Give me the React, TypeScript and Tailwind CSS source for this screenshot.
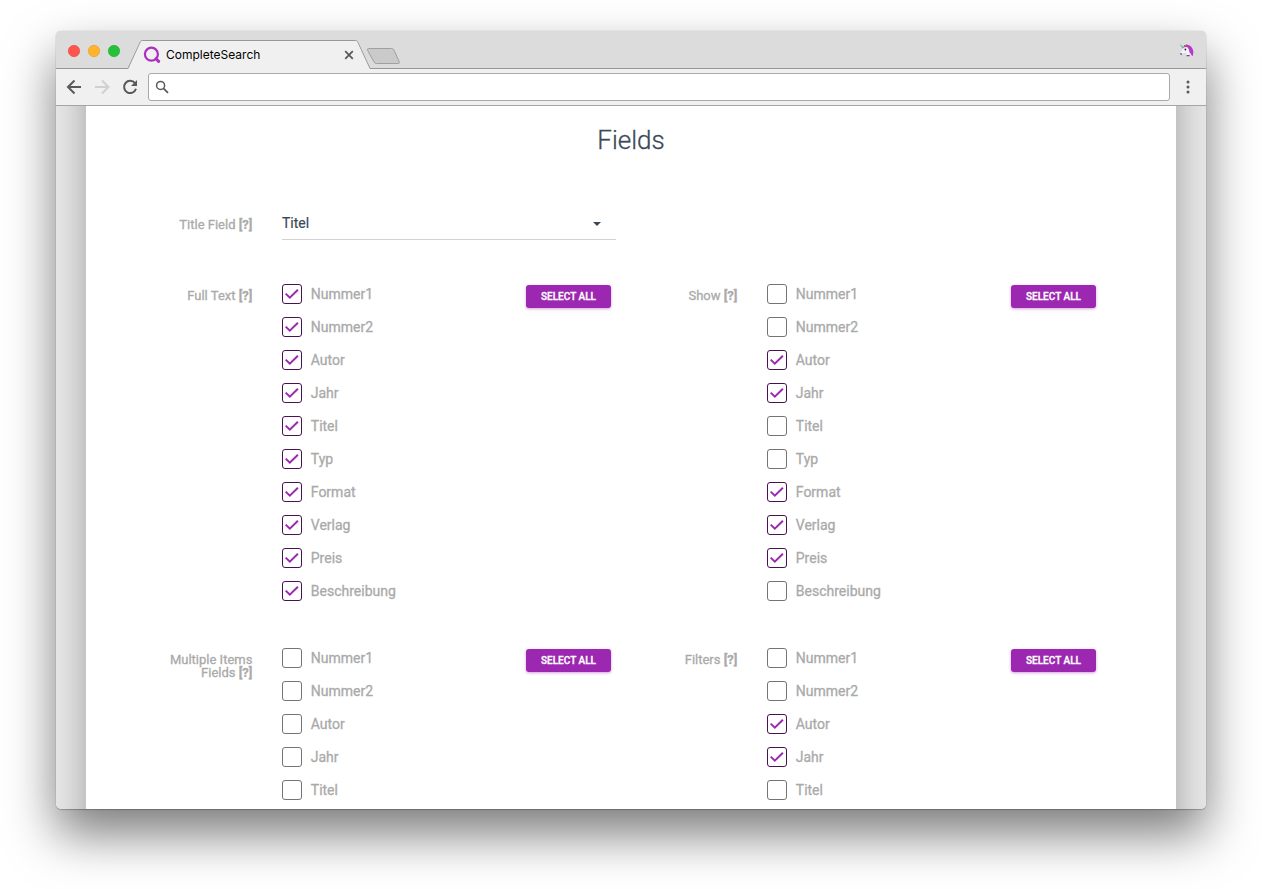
import React from "react";

const FIELDS = ["Nummer1", "Nummer2", "Autor", "Jahr", "Titel", "Typ", "Format", "Verlag", "Preis", "Beschreibung"];
const FIRST_FIELDS = FIELDS.slice(0, 5);

function Checkbox({ label, checked }: { label: string; checked: boolean }) {
  return (
    <label className="flex h-[33px] items-center">
      <span
        className={
          checked
            ? "flex size-5 items-center justify-center rounded-[3px] border border-[#4a1054]"
            : "flex size-5 items-center justify-center rounded-[3px] border border-[#747474]"
        }
      >
        {checked && (
          <svg width="18" height="18" viewBox="0 0 18 18" fill="none" stroke="#9c27b0" strokeWidth="2">
            <path d="M2.7 8.6 L6.8 12.6 L14.9 4.7" />
          </svg>
        )}
      </span>
      <span className="ml-[8.8px] text-[14px] leading-5 text-[#aaaaaa] [-webkit-text-stroke:0.3px_#aaaaaa]">{label}</span>
    </label>
  );
}

function Group({ title, fields, checked }: { title: string; fields: string[]; checked: string[] }) {
  return (
    <section className="flex h-[364px] w-[485px] items-start">
      <h4 className="w-[96.4px] pt-[12px] text-right text-[13px] leading-[13px] text-[#aaaaaa] [-webkit-text-stroke:0.3px_#aaaaaa]">
        {title} <b className="font-bold">[?]</b>
      </h4>
      <div className="ml-[29.6px] w-[244px]">
        {fields.map((f) => (
          <Checkbox key={f} label={f} checked={checked.includes(f)} />
        ))}
      </div>
      <button className="mt-[8px] h-[23px] w-[85px] rounded-[3px] bg-[#9c27b0] text-[10px] leading-[23px] font-medium text-white shadow-[0_1px_3px_rgba(156,39,176,0.45)] [-webkit-text-stroke:0.3px_white]">
        SELECT ALL
      </button>
    </section>
  );
}

function TabStrip() {
  return (
    <header className="relative flex h-[38px] shrink-0 items-center bg-[#dcdcdc]">
      <svg className="absolute inset-0" width="1150" height="38" fill="none">
        <path d="M0 37.5 H72 L84.4 10.8 Q85 9.5 86.4 9.5 H299.5 Q301 9.5 301.6 10.8 L314 37.5 H1150" stroke="#989898" />
        <path d="M72.5 38 L85 10.8 Q85.6 10 86.4 10 H299.5 Q300.4 10 301 10.8 L313.5 38 Z" fill="#f0f0f0" />
        <path d="M313 17.5 H335.5 Q337.3 17.5 338.2 19.3 L343.2 30.7 Q344 32.5 342.4 32.5 H320.5 Q318.7 32.5 317.8 30.7 L311.6 19.3 Q310.8 17.5 313 17.5 Z" fill="#cacaca" stroke="#a0a0a0" />
        <circle cx="18" cy="20" r="5.7" fill="#ff544d" stroke="#e2463f" strokeWidth=".6" />
        <circle cx="38" cy="20" r="5.7" fill="#ffb429" stroke="#e09b20" strokeWidth=".6" />
        <circle cx="58" cy="20" r="5.7" fill="#24c238" stroke="#1fa92f" strokeWidth=".6" />
        <circle cx="95.4" cy="23.2" r="6.5" stroke="#ac2fc0" strokeWidth="2.2" />
        <path d="M100 27.8 L102.6 30.4" stroke="#ac2fc0" strokeWidth="3" strokeLinecap="round" />
        <path d="M289.2 20.2 L296.8 27.8 M296.8 20.2 L289.2 27.8" stroke="#5a5a5a" strokeWidth="1.8" />
      </svg>
      <span className="relative ml-[110px] pt-[10px] font-[Inter,sans-serif] text-[12px] leading-[18px] text-black">CompleteSearch</span>
      <svg className="relative mr-3 ml-auto" width="15" height="15" viewBox="0 0 15 15">
        <path d="M6 2.2 C10 .5 14 4 14.4 9 Q14.4 12 13.2 13.2 Q12 10.5 10.2 9 Q9.6 5.5 6 2.2Z" fill="#b43ccb" />
        <path d="M4.5 4.5 Q7.5 3 9 5 Q10.8 7.5 10.4 9.5 L10.8 12.8 L7.2 13 L7.5 9.8 Q5 9.5 3.6 11 Q1.2 11.8 1 9.8 L3.4 6.7 Z" fill="#f2f2fa" />
        <path d="M.6 1 L5 4.5 L3.8 5.7 Z" fill="#51ba9b" />
        <path d="M4.8 4.2 L5.6 2 L6.6 3.8 L7.6 1.5 L8.5 4" fill="#c23f8f" stroke="#bc486f" strokeWidth=".6" />
        <circle cx="6.4" cy="6.5" r=".9" fill="#222" />
        <path d="M1.2 10.5 L3 11.4 M7.6 12.6 H10.6" stroke="#7d398a" strokeWidth="1.2" />
      </svg>
    </header>
  );
}

function Toolbar() {
  return (
    <nav className="flex h-[37px] shrink-0 items-center border-b border-[#a5a5a5] bg-[#f0f0f0]">
      <svg width="92" height="36" fill="none" strokeWidth="2">
        <path d="M25 18 H12 M18.5 11.5 L12 18 L18.5 24.5" stroke="#5a5a5a" />
        <path d="M39 18 H52 M46 11.5 L52.5 18 L46 24.5" stroke="#d0d0d0" />
        <path d="M79 14.2 A6.1 6.1 0 1 0 80 19.8" stroke="#5a5a5a" />
        <path d="M81 11 V17 H75 Z" fill="#5a5a5a" />
      </svg>
      <div className="flex h-7 w-[1022px] items-center rounded-[3px] border border-[#a9a9a9] bg-white pl-[6px]">
        <svg width="14" height="14" fill="none" stroke="#5a5a5a" strokeWidth="1.5">
          <circle cx="5.6" cy="5.4" r="4" />
          <path d="M8.5 8.3 L13 12.8" strokeWidth="1.8" />
        </svg>
      </div>
      <svg className="ml-4" width="4" height="16" fill="#5a5a5a">
        <circle cx="2" cy="3" r="1.5" />
        <circle cx="2" cy="8" r="1.5" />
        <circle cx="2" cy="13" r="1.5" />
      </svg>
    </nav>
  );
}

export default function App() {
  return (
    <div className="h-[889px] w-[1262px] overflow-hidden bg-white pt-[31px] pl-[56px] font-[Roboto,sans-serif]">
      <div className="h-[778px] w-[1150px] rounded-[5px] shadow-[0_0_1px_rgba(0,0,0,0.4),0_1px_1px_rgba(0,0,0,0.2),0_25px_50px_rgba(0,0,0,0.52)]">
        <div className="flex h-full flex-col overflow-hidden rounded-[5px]">
          <TabStrip />
          <Toolbar />
          <div className="flex min-h-0 flex-1 flex-col overflow-hidden bg-[#e5e5e5] px-[30px]">
            <main className="-my-10 min-h-0 flex-1 bg-white px-[70px] py-10 shadow-[0_0_24px_2px_rgba(0,0,0,0.14),0_0_30px_5px_rgba(0,0,0,0.12)]">
              <h2 className="-mx-[70px] pt-[14px] text-center text-[26px] leading-10 font-light text-[#3c4858] [-webkit-text-stroke:0.3px_#3c4858]">
                Fields
              </h2>
              <div className="mt-[46px] flex h-[71px] items-start">
                <h4 className="w-[96.4px] pt-[11px] text-right text-[13px] leading-[15px] text-[#aaaaaa] [-webkit-text-stroke:0.3px_#aaaaaa]">
                  Title Field <b className="font-bold">[?]</b>
                </h4>
                <div className="ml-[29.6px] flex h-[34px] w-[334px] items-center justify-between border-b border-[#d2d2d2] pt-[2px] pr-[15px] text-[14px] text-[#3c4858] [-webkit-text-stroke:0.2px_#3c4858]">
                  <span>Titel</span>
                  <svg width="8" height="4" fill="#3c4858">
                    <path d="M0 0 H8 L4 4 Z" />
                  </svg>
                </div>
              </div>
              <div className="grid grid-cols-[485px_485px]">
                <Group title="Full Text" fields={FIELDS} checked={FIELDS} />
                <Group title="Show" fields={FIELDS} checked={["Autor", "Jahr", "Format", "Verlag", "Preis"]} />
                <Group title="Multiple Items Fields" fields={FIRST_FIELDS} checked={[]} />
                <Group title="Filters" fields={FIRST_FIELDS} checked={["Autor", "Jahr"]} />
              </div>
            </main>
          </div>
        </div>
      </div>
    </div>
  );
}
